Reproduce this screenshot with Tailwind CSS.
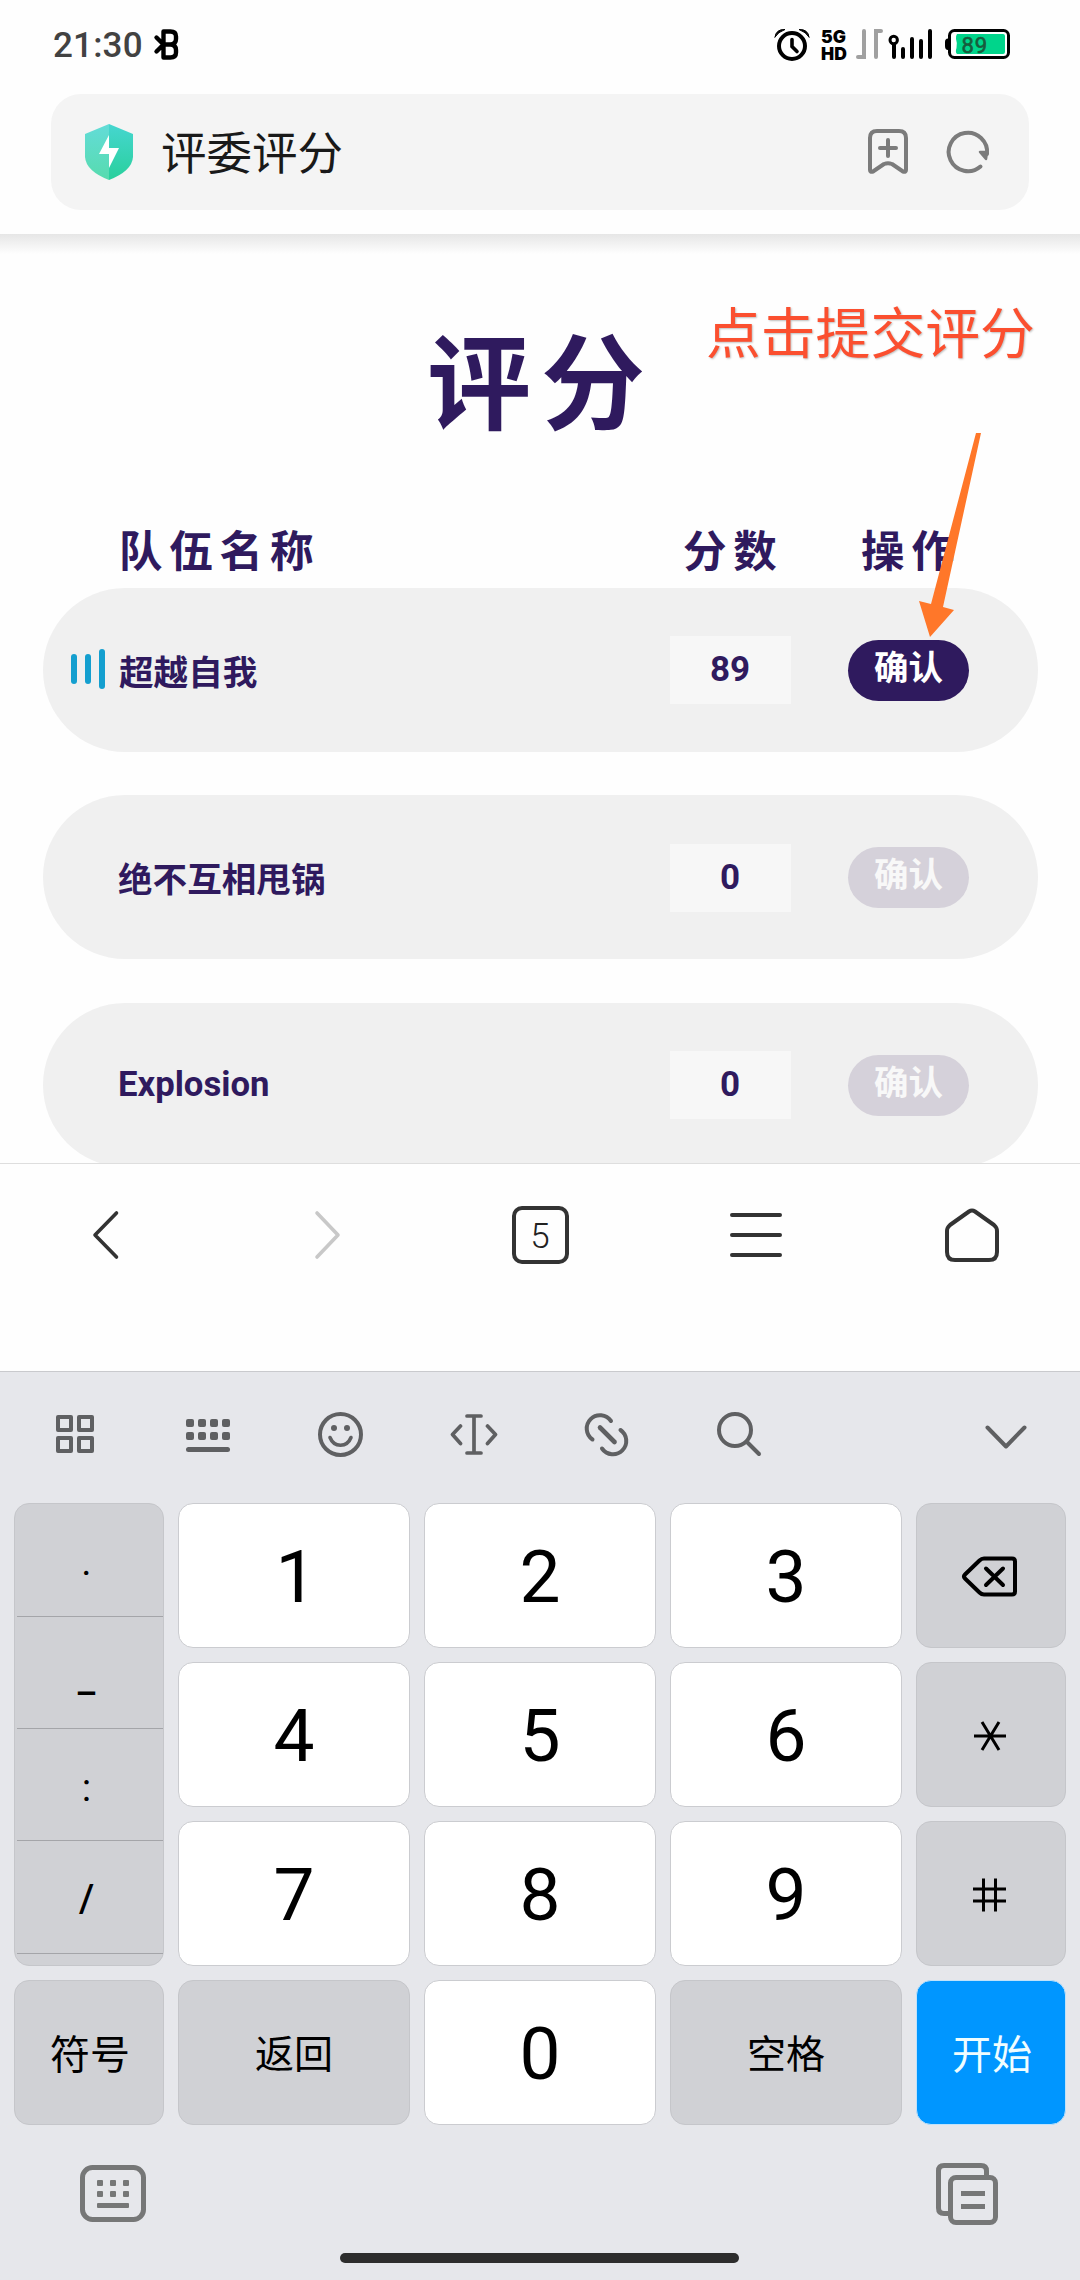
<!DOCTYPE html>
<html lang="zh-CN">
<head>
<meta charset="utf-8">
<title>评委评分</title>
<script src="https://cdn.jsdelivr.net/npm/@tailwindcss/browser@4"></script>
</head>
<body class="relative flex h-[2280px] w-[1080px] flex-col overflow-hidden bg-[#fefefe] font-['Noto_Sans_CJK_SC',sans-serif]">

<!-- status bar -->
<header class="flex h-[94px] shrink-0 items-start pt-[27px] pl-[53px]">
  <span class="w-[100px] pt-[1px] font-['Roboto',sans-serif] text-[35px] font-medium leading-[36px] tracking-[0.2px] text-[#424242]">21:30</span>
  <svg class="h-9 w-[28px]" viewBox="153 27 28 36" fill="none" stroke="#000" stroke-width="4.4" stroke-linecap="round" stroke-linejoin="round"><path d="M163.500 31.500H170.500q5.500 0 5.500 5V39q0 5-5.500 5.500q5.500.5 5.500 5.500V52.500q0 5-5.500 5H163.500ZM163.500 44.500H170.500M156.500 37.500L163.500 44.500L156.500 51.500"/></svg>
  <div class="ml-auto flex pr-[68px]">
    <svg class="h-9 w-[40px]" viewBox="773 27 40 36" fill="none" stroke="#000" stroke-linecap="round"><circle cx="792" cy="46" r="13" stroke-width="4"/><path d="M792 39.500V46.500L797 51.500" stroke-width="3.600"/><path d="M775 37Q776 29 785 29.500Q778 32 775 37ZM809 37Q808 29 799 29.500Q806 32 809 37Z" fill="#000" stroke-width="1"/></svg>
    <div class="mt-[1px] w-[43px] pl-[8px] font-['Inter',sans-serif] text-[17.500px] font-black leading-[17px] text-black"><div>5G</div><div>HD</div></div>
    <svg class="h-9 w-[88px]" viewBox="856 27 88 36" fill="none" stroke="#000" stroke-width="4" stroke-linecap="round"><path d="M864 31V57H858M876 57V31H881" stroke="#a0a0a0"/><circle cx="893.700" cy="40" r="3.700" stroke-width="3"/><path d="M894 45V57M903 49V57M912 39V57M921 41V57M930 31V57"/></svg>
    <svg class="h-9 w-[68px]" viewBox="944 27 68 36" fill="none"><rect x="949.500" y="30.500" width="59" height="27" rx="5" stroke="#000" stroke-width="3"/><path d="M948 40Q946.500 40 946.500 42V46Q946.500 48.500 948 48.500" stroke="#000" stroke-width="3"/><path d="M957 34H1003Q1005 34 1005 36V52Q1005 54 1003 54H957Q955 52 956.500 48Q957.500 43 956 39Q955.500 36 957 34Z" fill="#00d58b"/><text x="961.500" y="52.500" font-family="Roboto" font-size="22" letter-spacing="1" fill="#175c3c" stroke="#175c3c" stroke-width=".6">89</text></svg>
  </div>
</header>

<!-- address bar -->
<div class="h-[140px] shrink-0 pl-[51px] pr-[51px]">
  <div class="flex h-[116px] items-center rounded-[30px] bg-[#f4f4f4] pl-[34px]">
    <svg class="h-[56px] w-[48px]" viewBox="0 0 48 56"><defs><linearGradient id="a" x2="0" y2="1"><stop stop-color="#63dcd8"/><stop offset="1" stop-color="#57dbae"/></linearGradient><linearGradient id="b" x2="0" y2="1"><stop stop-color="#46d6d0"/><stop offset="1" stop-color="#29d09c"/></linearGradient></defs><path d="M24 0L0 10V33Q1 47 24 56Z" fill="url(#a)"/><path d="M24 0L48 10V33Q47 47 24 56Z" fill="url(#b)"/><path d="M24 11L14 30H24V44L34 24H24Z" fill="#fff"/></svg>
    <span class="-mt-[4px] pl-[28px] text-[45.500px] leading-[60px] text-[#191919]">评委评分</span>
    <svg class="ml-auto h-12 w-12" viewBox="864 128 48 48" fill="none" stroke="#7b7b7b" stroke-width="4" stroke-linecap="round" stroke-linejoin="round"><path d="M877 131H899Q906 131 906 138V170Q906 172.500 903 171.500L892 164Q888 162.500 884 164L873 171.500Q870 172.500 870 170V138Q870 131 877 131ZM888 140V156M880 148H896"/></svg>
    <svg class="ml-8 mr-[37px] h-12 w-12" viewBox="944 128 48 48" fill="none" stroke="#7b7b7b" stroke-width="4" stroke-linecap="round"><path d="M980.500 166.500A19.200 19.200 0 1 1 987 154"/><path d="M980 152H987L986 159Z" fill="#7b7b7b" stroke-width="2.500" stroke-linejoin="round"/></svg>
  </div>
</div>

<!-- page content -->
<main class="flex h-[929px] shrink-0 flex-col overflow-hidden text-[#2f1a5e]">
  <div class="h-[20px] shrink-0 bg-linear-to-b from-[#e6e6e6] to-[#fefefe]"></div>
  <h1 class="mt-[53px] shrink-0 pl-[427px] text-[104px] font-bold leading-[140px] tracking-[10px]">评分</h1>
  <div class="mt-[70px] flex h-[64px] shrink-0 pl-[119px] text-[43.500px] font-bold leading-[64px] tracking-[6.800px]">
    <span class="w-[564px]">队伍名称</span><span class="w-[178px]">分数</span><span>操作</span>
  </div>
  <div class="mt-[7px] flex shrink-0 flex-col px-[43px] pr-[42px]">
    <div class="flex h-[164px] items-center rounded-full bg-[#f0f0f0] pr-[69px]">
      <span class="flex w-[76px] items-center gap-2 pl-[28px] pb-[3px]"><i class="h-[30px] w-[6px] rounded-full bg-[#149fcf]"></i><i class="h-[30px] w-[6px] rounded-full bg-[#149fcf]"></i><i class="h-[40px] w-[6px] rounded-full bg-[#149fcf]"></i></span>
      <span class="-mt-px flex-1 text-[34.600px] font-bold leading-[50px]">超越自我</span>
      <span class="h-[68px] w-[121px] bg-[#f7f7f7] pr-[1px] text-center font-['Roboto',sans-serif] text-[35px] font-bold leading-[67px]">89</span>
      <span class="ml-[57px] h-[61px] w-[121px] rounded-full bg-[#2f1a5e] text-center text-[34.500px] font-bold leading-[51px] text-white">确认</span>
    </div>
    <div class="mt-[43px] flex h-[164px] items-center rounded-full bg-[#f0f0f0] pr-[69px]">
      <span class="w-[75px]"></span>
      <span class="-mt-px flex-1 text-[34.600px] font-bold leading-[50px]">绝不互相甩锅</span>
      <span class="mt-px h-[68px] w-[121px] bg-[#f7f7f7] pr-[1px] text-center font-['Roboto',sans-serif] text-[35px] font-bold leading-[67px]">0</span>
      <span class="ml-[57px] h-[61px] w-[121px] rounded-full bg-[#d5d1da] text-center text-[34.500px] font-bold leading-[51px] text-[#f8f8f8]">确认</span>
    </div>
    <div class="mt-[44px] flex h-[164px] items-center rounded-full bg-[#f0f0f0] pr-[69px]">
      <span class="w-[75px]"></span>
      <span class="-mt-[2px] flex-1 font-['Roboto',sans-serif] text-[34.700px] font-bold leading-[50px]">Explosion</span>
      <span class="h-[68px] w-[121px] bg-[#f7f7f7] pr-[1px] text-center font-['Roboto',sans-serif] text-[35px] font-bold leading-[67px]">0</span>
      <span class="ml-[57px] h-[61px] w-[121px] rounded-full bg-[#d5d1da] text-center text-[34.500px] font-bold leading-[51px] text-[#f8f8f8]">确认</span>
    </div>
  </div>
</main>

<!-- browser toolbar -->
<nav class="grid h-[208px] shrink-0 grid-cols-5 justify-items-center border-t border-[#dedede] pt-[39px]">
  <svg class="size-16" viewBox="0 0 64 64" fill="none" stroke="#333" stroke-width="3.600" stroke-linecap="round" stroke-linejoin="round"><path d="M40.500 10L19 32L40.500 54"/></svg>
  <svg class="size-16" viewBox="0 0 64 64" fill="none" stroke="#c8c8c8" stroke-width="3.600" stroke-linecap="round" stroke-linejoin="round"><path d="M25 10L46 32L25 54"/></svg>
  <span class="mt-[3px] h-[58px] w-[57px] rounded-[10px] border-4 border-[#333] text-center font-['Roboto',sans-serif] text-[35px] font-light leading-[53px] text-[#222]">5</span>
  <svg class="size-16" viewBox="0 0 64 64" fill="none" stroke="#333" stroke-width="4" stroke-linecap="round"><path d="M8 12H56M8 32H56M8 52H56"/></svg>
  <svg class="size-16" viewBox="0 0 64 64" fill="none" stroke="#333" stroke-width="4" stroke-linejoin="round"><path d="M29 8.500Q32 6.500 35 8.500L54 22Q57 24.500 57 28V49Q57 57 49 57H15Q7 57 7 49V28Q7 24.500 10 22Z"/></svg>
</nav>

<!-- soft keyboard -->
<section class="flex h-[909px] shrink-0 flex-col border-t border-[#c9cacd] bg-[#e6e7eb] text-black">
  <div class="flex h-[131px] shrink-0 gap-[85px] pt-[38px] pl-[51px] pr-[50px] text-[#5f6062]">
    <svg class="size-12 shrink-0" viewBox="51 1410 48 48" fill="none" stroke="currentColor" stroke-width="4" stroke-linejoin="round"><path d="M58 1417H71V1430H58ZM79 1417H92V1430H79ZM58 1438H71V1451H58ZM79 1438H92V1451H79Z"/></svg>
    <svg class="size-12 shrink-0" viewBox="184 1410 48 48" fill="currentColor"><g id="k"><rect x="186" y="1419" width="8" height="8" rx="2"/><rect x="198" y="1419" width="8" height="8" rx="2"/><rect x="210" y="1419" width="8" height="8" rx="2"/><rect x="222" y="1419" width="8" height="8" rx="2"/></g><use href="#k" y="13"/><rect x="186" y="1447" width="44" height="5" rx="2.500"/></svg>
    <svg class="size-12 shrink-0" viewBox="317 1410 48 48" fill="none" stroke="currentColor" stroke-width="4" stroke-linecap="round"><circle cx="340.500" cy="1434.500" r="20.500"/><path d="M330 1437.500Q333 1445 340.500 1445.300Q348 1445 351 1437.500" stroke-width="3.600"/><circle cx="334" cy="1428" r="3" fill="currentColor" stroke="none"/><circle cx="347" cy="1428" r="3" fill="currentColor" stroke="none"/></svg>
    <svg class="size-12 shrink-0" viewBox="450 1410 48 48" fill="none" stroke="currentColor" stroke-width="4" stroke-linecap="round" stroke-linejoin="round"><path d="M467 1416H481M474 1416V1453M467 1453H481M460.500 1426L452.500 1434.500L460.500 1443.500M487.500 1426L495.500 1434.500L487.500 1443.500" stroke-width="3.700"/></svg>
    <svg class="size-12 shrink-0" viewBox="582.500 1410 48 48" fill="none" stroke="currentColor" stroke-width="4" stroke-linecap="round"><path d="M610.500 1421A13.300 13.300 0 1 0 592 1439.500M620 1430A13.300 13.300 0 1 1 601.500 1448.500"/><path d="M599.500 1427.500L614 1442" stroke-width="4.600"/></svg>
    <svg class="size-12 shrink-0" viewBox="716 1410 48 48" fill="none" stroke="currentColor" stroke-width="4" stroke-linecap="round"><circle cx="735" cy="1430" r="16"/><path d="M747 1442L759 1454"/></svg>
    <svg class="ml-auto size-12 shrink-0" viewBox="982 1410 48 48" fill="none" stroke="currentColor" stroke-width="4" stroke-linecap="round" stroke-linejoin="round"><path d="M987.500 1427.500L1006 1446.500L1024.500 1427.500"/></svg>
  </div>

  <div class="grid shrink-0 grid-cols-[150px_232px_232px_232px_150px] grid-rows-[145px_145px_145px_145px] gap-[14px] pl-[14px] font-['Roboto',sans-serif] text-[73px]">
    <div class="row-span-3 flex flex-col rounded-[15px] border border-[#c5c6ca] bg-[#d0d1d5] pl-[2px] text-center text-[39px] font-medium leading-[115px]">
      <div class="h-[113px] border-b border-[#a4a5a9] pr-[7px] font-normal leading-[117px]">.</div>
      <div class="h-[112px] border-b border-[#a4a5a9] pr-[7px] leading-[122px]">_</div>
      <div class="h-[112px] border-b border-[#a4a5a9] pr-[7px] font-normal leading-[119px]">:</div>
      <div class="h-[113px] border-b border-[#a4a5a9] pr-[7px] leading-[117px]">/</div>
    </div>
    <div class="flex items-center justify-center rounded-[15px] border border-[#cbccd0] bg-white pt-[4px] pl-[4px]">1</div>
    <div class="flex items-center justify-center rounded-[15px] border border-[#cbccd0] bg-white pt-[4px]">2</div>
    <div class="flex items-center justify-center rounded-[15px] border border-[#cbccd0] bg-white pt-[4px]">3</div>
    <div class="flex items-center justify-center rounded-[15px] border border-[#c5c6ca] bg-[#d0d1d5]">
      <svg class="h-12 w-16" viewBox="959 1552.500 64 48" fill="none" stroke="#000" stroke-width="4" stroke-linecap="round" stroke-linejoin="round"><path d="M984 1559H1012Q1015 1559 1015 1562V1592Q1015 1595 1012 1595H984Q981.500 1595 979.500 1593L965 1579Q963 1577 965 1575L979.500 1561Q981.500 1559 984 1559ZM986 1569L1003 1585.500M1003 1569L986 1585.500"/></svg>
    </div>
    <div class="flex items-center justify-center rounded-[15px] border border-[#cbccd0] bg-white pt-[4px]">4</div>
    <div class="flex items-center justify-center rounded-[15px] border border-[#cbccd0] bg-white pt-[4px]">5</div>
    <div class="flex items-center justify-center rounded-[15px] border border-[#cbccd0] bg-white pt-[4px]">6</div>
    <div class="flex items-center justify-center rounded-[15px] border border-[#c5c6ca] bg-[#d0d1d5]">
      <svg class="size-10" viewBox="971 1714.500 40 40" fill="none" stroke="#000" stroke-width="3"><path d="M974 1735.500H1006M982 1721.500L999 1749.500M999 1721.500L982 1749.500"/></svg>
    </div>
    <div class="flex items-center justify-center rounded-[15px] border border-[#cbccd0] bg-white pt-[4px]">7</div>
    <div class="flex items-center justify-center rounded-[15px] border border-[#cbccd0] bg-white pt-[4px]">8</div>
    <div class="flex items-center justify-center rounded-[15px] border border-[#cbccd0] bg-white pt-[4px]">9</div>
    <div class="flex items-center justify-center rounded-[15px] border border-[#c5c6ca] bg-[#d0d1d5]">
      <svg class="size-10" viewBox="971 1873.500 40 40" fill="none" stroke="#000" stroke-width="3"><path d="M973 1888.500H1006M973 1900.500H1006M983.500 1878V1911M995.500 1878V1911"/></svg>
    </div>
    <div class="flex items-center justify-center rounded-[15px] border border-[#c5c6ca] bg-[#d0d1d5] pb-[2px] pl-[2px] font-['Noto_Sans_CJK_SC',sans-serif] text-[40px]">符号</div>
    <div class="flex items-center justify-center rounded-[15px] border border-[#c5c6ca] bg-[#d0d1d5] pb-[2px] font-['Noto_Sans_CJK_SC',sans-serif] text-[39px]">返回</div>
    <div class="flex items-center justify-center rounded-[15px] border border-[#cbccd0] bg-white pt-[4px]">0</div>
    <div class="flex items-center justify-center rounded-[15px] border border-[#c5c6ca] bg-[#d0d1d5] pb-[2px] font-['Noto_Sans_CJK_SC',sans-serif] text-[39px]">空格</div>
    <div class="flex items-center justify-center rounded-[15px] border border-[#bfe2fb] bg-[#0096ff] pb-[2px] pl-[2px] font-['Noto_Sans_CJK_SC',sans-serif] text-[40px] text-[#effdff]">开始</div>
  </div>

  <div class="flex h-[128px] shrink-0 justify-between pt-[35px] pl-[77px] pr-[76px]">
    <svg class="h-[70px] w-[72px]" viewBox="77 2160 72 70" fill="#767777"><rect x="82.500" y="2167.500" width="61" height="52" rx="10" fill="none" stroke="#767777" stroke-width="5"/><g id="d"><rect x="97" y="2180" width="6" height="6" rx="1"/><rect x="110" y="2180" width="6" height="6" rx="1"/><rect x="123" y="2180" width="6" height="6" rx="1"/></g><use href="#d" y="11"/><rect x="97" y="2203" width="32" height="5" rx="1"/></svg>
    <svg class="h-[70px] w-[70px]" viewBox="934 2160 70 70" fill="none" stroke="#767777" stroke-width="5"><path d="M948 2213.500H944Q938.500 2213.500 938.500 2208V2171Q938.500 2165.500 944 2165.500H981Q986.500 2165.500 986.500 2171V2175"/><rect x="950.500" y="2177.500" width="45" height="45" rx="5.500"/><path d="M961 2193.500H985M961 2206.500H985"/></svg>
  </div>
  <div class="ml-[340px] h-[10px] w-[399px] shrink-0 rounded-full bg-[#2d2d2d]"></div>
</section>

<!-- annotation over the page -->
<div class="absolute top-[299px] left-[706px] text-[54.800px] leading-[60px] text-[#fb4f2f] [text-shadow:1px_1px_2px_rgba(0,0,0,0.25)]">点击提交评分</div>
<svg class="absolute top-[431px] left-[914px] h-[210px] w-[70px]" viewBox="914 431 70 210" fill="#ff7729"><path d="M976 433H981L943 607L954 610L930 637L919 601L931 604Z"/></svg>
</body>
</html>
